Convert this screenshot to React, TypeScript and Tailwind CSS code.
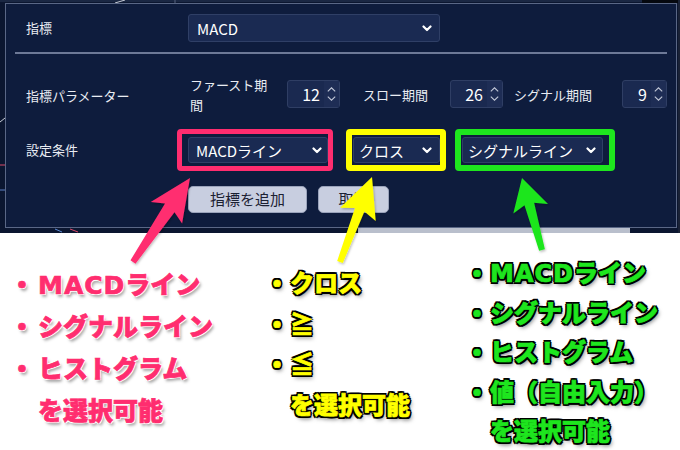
import React from "react";

const Chevron = () => (
  <svg width="10" height="7" viewBox="0 0 10 7" className="shrink-0">
    <polyline points="1.5,1.5 5,5 8.5,1.5" fill="none" stroke="#ffffff" strokeWidth="2.2" strokeLinecap="round" strokeLinejoin="round" />
  </svg>
);

function Select({ label, className }: { label: string; className: string }) {
  return (
    <div className={`h-[26px] flex items-center justify-between bg-[#1a2a52] border border-[#2f3f66] rounded-[3px] text-[15px] text-white ${className}`}>
      <span className="leading-none whitespace-nowrap">{label}</span>
      <Chevron />
    </div>
  );
}

function NumInput({ value, className }: { value: string; className: string }) {
  return (
    <div className={`h-[28px] flex bg-[#1a2950] border border-[#2f3e64] rounded-[3px] shrink-0 ${className}`}>
      <div className="flex-1 flex items-center justify-end pr-[4px] text-[16px] text-white leading-none">{value}</div>
      <div className="w-[15px] flex flex-col items-center justify-center gap-[4px] bg-[#1e2d55]">
        <svg width="9" height="5" viewBox="0 0 9 5">
          <polyline points="0.8,4.3 4.5,0.8 8.2,4.3" fill="none" stroke="#c3c9d8" strokeWidth="1.1" />
        </svg>
        <svg width="9" height="5" viewBox="0 0 9 5">
          <polyline points="0.8,0.7 4.5,4.2 8.2,0.7" fill="none" stroke="#c3c9d8" strokeWidth="1.1" />
        </svg>
      </div>
    </div>
  );
}

const outlineBlack =
  "[text-shadow:-1.6px_-1.6px_0_#000,1.6px_-1.6px_0_#000,-1.6px_1.6px_0_#000,1.6px_1.6px_0_#000,0_-2px_0_#000,0_2px_0_#000,-2px_0_0_#000,2px_0_0_#000,2px_3px_4px_rgba(0,0,0,0.55)] [-webkit-text-stroke:0.7px_currentColor]";
const outlineWhite =
  "[text-shadow:-1px_-1px_0_#fff,1px_-1px_0_#fff,-1px_1px_0_#fff,1px_1px_0_#fff,2px_3px_3px_rgba(0,0,0,0.35)] [-webkit-text-stroke:0.7px_currentColor]";

function Bullet() {
  return <span className="w-[16px] flex justify-center shrink-0">・</span>;
}

const Latin = ({ children }: { children: React.ReactNode }) => (
  <span className="font-['DejaVu_Sans',sans-serif] font-bold tracking-[1px] leading-none">{children}</span>
);

export default function App() {
  return (
    <div className="w-[680px] h-[450px] bg-white relative overflow-hidden font-['Noto_Sans_CJK_JP',sans-serif]">
      {/* chart background with dialog */}
      <div className="relative h-[233px] bg-[#0b1630] pl-[5px] pt-[3px]">
        <svg className="absolute left-0 top-0" width="680" height="233">
          <line x1="0" y1="1" x2="680" y2="1" stroke="#2b3857" strokeWidth="1" />
          <line x1="175" y1="0" x2="175" y2="3" stroke="#56627e" strokeWidth="1" />
          <line x1="115" y1="3" x2="125" y2="0" stroke="#c7ccd8" strokeWidth="1" />
          <line x1="0" y1="122" x2="5" y2="118" stroke="#c7ccd8" strokeWidth="1" />
          <line x1="0" y1="165" x2="5" y2="165" stroke="#d94a6a" strokeWidth="1" />
          <line x1="0" y1="190" x2="5" y2="190" stroke="#5c7fc4" strokeWidth="1" />
          <line x1="55" y1="229" x2="62" y2="232" stroke="#5c8ad4" strokeWidth="1" />
          <line x1="70" y1="229" x2="78" y2="232" stroke="#d94a6a" strokeWidth="1" />
          <rect x="358" y="228" width="272" height="5" fill="#b9bfcc" />
          <rect x="642" y="0" width="38" height="3" fill="#05080f" />
          <rect x="678" y="0" width="2" height="233" fill="#1a2236" />
        </svg>
        <div className="relative w-[672px] h-[225px] bg-[#0e1c3d] border border-[#5a6786] flex flex-col text-[13px] text-[#e9ecf3]">
          {/* row 1 */}
          <div className="flex items-center h-[28px] mt-[10px]">
            <div className="w-[182px] pl-[20px] shrink-0">指標</div>
            <div className="w-[252px] h-[28px] flex items-center justify-between bg-[#1a2a52] border border-[#2f3f66] rounded-[3px] pl-[8px] pr-[7px] text-[15px] text-white">
              <span className="leading-none">MACD</span>
              <Chevron />
            </div>
          </div>
          {/* divider */}
          <div className="mx-[9px] mt-[10px] h-[2px] bg-[#6d7997]" />
          {/* row 2 */}
          <div className="flex items-center h-[28px] mt-[26px]">
            <div className="w-[182px] pl-[20px] shrink-0 pt-[4px] whitespace-nowrap">指標パラメーター</div>
            <div className="w-[88px] ml-[2px] leading-[20px] shrink-0 pt-[2px]">ファースト期間</div>
            <NumInput value="12" className="w-[53px] ml-[9px]" />
            <div className="w-[110px] pl-[23px] shrink-0 pt-[2px] whitespace-nowrap">スロー期間</div>
            <NumInput value="26" className="w-[53px]" />
            <div className="w-[119px] pl-[11px] shrink-0 pt-[2px] whitespace-nowrap">シグナル期間</div>
            <NumInput value="9" className="w-[45px]" />
          </div>
          {/* row 3 */}
          <div className="flex items-center h-[42px] mt-[21px]">
            <div className="w-[171px] pl-[20px] shrink-0">設定条件</div>
            <div className="w-[156px] h-[42px] border-[5px] border-[#ff2d6f] rounded-[4px] flex items-center pl-[6px]">
              <Select label="MACDライン" className="w-[140px] pl-[7px] pr-[5px]" />
            </div>
            <div className="w-[100px] h-[42px] ml-[13px] border-[6px] border-[#ffff00] rounded-[4px] flex items-center pl-[1px]">
              <Select label="クロス" className="w-[87px] pl-[5px] pr-[7px]" />
            </div>
            <div className="w-[160px] h-[42px] ml-[9px] border-[6px] border-[#1ee61e] rounded-[4px] flex items-center pl-[1px]">
              <Select label="シグナルライン" className="w-[141px] pl-[5px] pr-[6px]" />
            </div>
          </div>
          {/* row 4 buttons */}
          <div className="flex items-center h-[27px] mt-[15px] pl-[182px]">
            <div className="w-[119px] h-[27px] rounded-[5px] bg-[#c8cee0] border border-[#9aa3bb] flex items-center justify-center text-[15px] text-[#1b2032]">
              指標を追加
            </div>
            <div className="w-[71px] h-[27px] ml-[11px] rounded-[5px] bg-[#c8cee0] border border-[#9aa3bb] flex items-center justify-center text-[15px] text-[#1b2032]">
              取消
            </div>
          </div>
        </div>
      </div>

      {/* annotations */}
      <div className="grid grid-cols-[269px_200px_211px] font-black">
        <div className={`pl-[10px] pt-[29px] text-[25px] leading-[42px] text-[#ff2d6f] ${outlineWhite}`}>
          <div className="flex"><span className="w-[24px] flex justify-center shrink-0">・</span><span className="ml-[4px]"><Latin>MACD</Latin>ライン</span></div>
          <div className="flex"><span className="w-[24px] flex justify-center shrink-0">・</span><span className="ml-[4px]">シグナルライン</span></div>
          <div className="flex"><span className="w-[24px] flex justify-center shrink-0">・</span><span className="ml-[4px]">ヒストグラム</span></div>
          <div className="pl-[28px]">を選択可能</div>
        </div>
        <div className={`pt-[29px] text-[24px] leading-[40.5px] text-[#ffff00] ${outlineBlack}`}>
          <div className="flex"><Bullet /><span className="ml-[5px]">クロス</span></div>
          <div className="flex"><Bullet /><span className="ml-[5px]">≧</span></div>
          <div className="flex"><Bullet /><span className="ml-[5px]">≦</span></div>
          <div className="pl-[21px]">を選択可能</div>
        </div>
        <div className={`pt-[19px] text-[24px] leading-[39.5px] text-[#1ee61e] ${outlineBlack}`}>
          <div className="flex"><Bullet /><span className="ml-[5px]"><Latin>MACD</Latin>ライン</span></div>
          <div className="flex"><Bullet /><span className="ml-[5px]">シグナルライン</span></div>
          <div className="flex"><Bullet /><span className="ml-[5px]">ヒストグラム</span></div>
          <div className="flex"><Bullet /><span className="ml-[5px]">値（自由入力）</span></div>
          <div className="pl-[21px]">を選択可能</div>
        </div>
      </div>

      {/* arrows overlay */}
      <svg className="absolute left-0 top-0 pointer-events-none" width="680" height="450">
        <defs>
          <filter id="sh" x="-20%" y="-20%" width="140%" height="140%">
            <feDropShadow dx="1" dy="1.5" stdDeviation="1.2" floodColor="#000" floodOpacity="0.25" />
          </filter>
        </defs>
        <polygon
          filter="url(#sh)"
          fill="#ff2d6f"
          points="190,178 182.1,223.5 174.5,212.2 135.5,263.7 130.5,260.3 165,203.4 150.7,202.1"
        />
        <polygon
          filter="url(#sh)"
          fill="#ffff00"
          points="372,177 375.7,221.1 364.4,211.5 342.8,263.1 337.2,260.9 355,207.9 340.1,207.7"
        />
        <polygon
          filter="url(#sh)"
          fill="#1ee61e"
          points="522,178 548,204 534.1,202.7 544.9,249.2 539.1,250.8 524.5,205.3 513.3,213.6"
        />
      </svg>
    </div>
  );
}
